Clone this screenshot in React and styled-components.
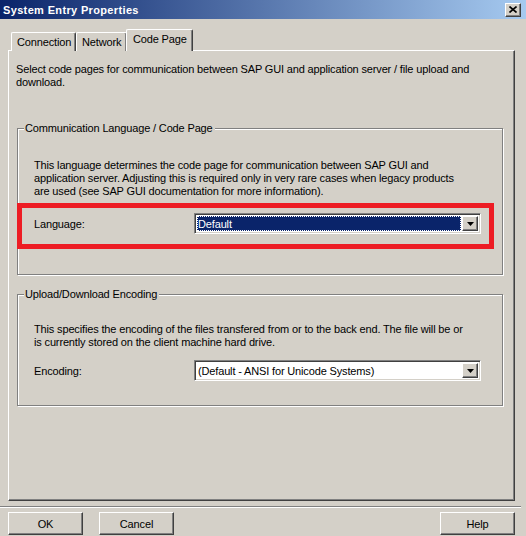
import React from 'react'
import styled, { createGlobalStyle, css } from 'styled-components'

const colors = {
  face: '#d4d0c8',
  shadow: '#808080',
  dark: '#404040',
  light: '#ffffff',
  select: '#0a246a',
  mark: '#ed1c24',
}

const GlobalStyle = createGlobalStyle`
  html, body {
    margin: 0;
    padding: 0;
    background: ${colors.face};
  }
  body {
    font-family: 'Liberation Sans', Arial, sans-serif;
    font-size: 11px;
    letter-spacing: -0.15px;
    color: #000;
  }
`

const raised = css`
  border-top: 1px solid ${colors.light};
  border-left: 1px solid ${colors.light};
  border-right: 1px solid ${colors.dark};
  border-bottom: 1px solid ${colors.dark};
  box-shadow: inset -1px -1px 0 ${colors.shadow};
`

const Window = styled.div`
  width: 526px;
  height: 536px;
  display: flex;
  flex-direction: column;
  background: ${colors.face};
  overflow: hidden;
`

const TitleBar = styled.div`
  height: 19px;
  flex: none;
  display: flex;
  align-items: center;
  justify-content: space-between;
  padding: 0 5px 0 3px;
  background: linear-gradient(to right, ${colors.select}, #a6caf0);
`

const Title = styled.span`
  color: #fff;
  font-weight: bold;
  font-size: 11px;
  letter-spacing: 0.35px;
`

const CloseButton = styled.div`
  width: 14px;
  height: 12px;
  background: ${colors.face};
  ${raised};
  display: flex;
  align-items: center;
  justify-content: center;
`

const Body = styled.div`
  flex: 1;
  display: flex;
  flex-direction: column;
  padding: 10px 11px 0 8px;
`

const TabRow = styled.div`
  display: flex;
  align-items: flex-end;
  padding-left: 3px;
  height: 22px;
  margin-bottom: -1px;
  position: relative;
  z-index: 1;
`

const Tab = styled.div`
  background: ${colors.face};
  border-top: 1px solid ${colors.light};
  border-left: 1px solid ${colors.light};
  border-right: 1px solid ${colors.dark};
  box-shadow: inset -1px 0 0 ${colors.shadow};
  border-radius: 2px 2px 0 0;
  box-sizing: border-box;
  width: ${p => p.$w}px;
  height: ${p => (p.$active ? 22 : 19)}px;
  margin: ${p => (p.$active ? '0 -2px 0 -1px' : '0')};
  padding: ${p => (p.$active ? '3px 0 0 6px' : '3px 0 0 5px')};
  white-space: nowrap;
`

const Panel = styled.div`
  height: 451px;
  box-sizing: border-box;
  ${raised};
  display: flex;
  flex-direction: column;
  padding: 12px 11px 0 7px;
`

const Intro = styled.p`
  margin: 0;
  line-height: 13px;
`

const Group = styled.fieldset`
  margin: ${p => p.$top}px 0 0 1px;
  padding: 0;
  height: ${p => p.$h}px;
  box-sizing: border-box;
  border: 1px solid ${colors.shadow};
  box-shadow: 1px 1px 0 ${colors.light}, inset 1px 1px 0 ${colors.light};
  display: flex;
  flex-direction: column;
`

const Legend = styled.legend`
  margin-left: 6px;
  padding: 0 2px 0 1px;
  line-height: 13px;
  background: ${colors.face};
`

const Note = styled.p`
  margin: ${p => p.$top}px 0 0 16px;
  line-height: 13px;
  padding-right: ${p => p.$right}px;
`

const Row = styled.div`
  display: flex;
  align-items: center;
  height: 21px;
  padding: 0 20px 0 16px;
  margin-top: ${p => p.$top}px;
`

const Highlight = styled.div`
  display: flex;
  align-items: center;
  box-sizing: border-box;
  margin: ${p => p.$top}px 8px 0 -1px;
  border: 5px solid ${colors.mark};
  height: 46px;
  padding: 0 8px 5px 12px;
`

const Label = styled.span`
  width: 160px;
  flex: none;
`

const Select = styled.div`
  width: 287px;
  height: 21px;
  box-sizing: border-box;
  display: flex;
  align-items: stretch;
  background: #fff;
  border-top: 1px solid ${colors.shadow};
  border-left: 1px solid ${colors.shadow};
  border-right: 1px solid ${colors.light};
  border-bottom: 1px solid ${colors.light};
  box-shadow: inset 1px 1px 0 ${colors.dark}, inset -1px -1px 0 ${colors.face};
  padding: 2px;
`

const Value = styled.div`
  flex: 1;
  display: flex;
  align-items: center;
  padding-left: 1px;
  margin-right: 1px;
  white-space: nowrap;
  ${p => p.$selected && css`
    background: ${colors.select};
    color: #fff;
    outline: 1px dotted ${colors.light};
    outline-offset: -1px;
  `}
`

const DropButton = styled.div`
  width: 16px;
  flex: none;
  box-sizing: border-box;
  background: ${colors.face};
  ${raised};
  display: flex;
  align-items: center;
  justify-content: center;
`

const Separator = styled.div`
  margin: 5px -6px 0 -8px;
  height: 0;
  border-top: 1px solid ${colors.shadow};
  border-bottom: 1px solid ${colors.light};
`

const Footer = styled.div`
  display: flex;
  gap: 16px;
  margin-top: 4px;
`

const Button = styled.div`
  width: 75px;
  height: 23px;
  box-sizing: border-box;
  ${raised};
  display: flex;
  align-items: center;
  justify-content: center;
  margin-left: ${p => (p.$push ? 'auto' : '0')};
`

function Arrow() {
  return (
    <svg width="7" height="4" viewBox="0 0 7 4">
      <path d="M0 0h7L3.5 4z" fill="#000" />
    </svg>
  )
}

function Dropdown({ value, selected }) {
  return (
    <Select>
      <Value $selected={selected}>{value}</Value>
      <DropButton><Arrow /></DropButton>
    </Select>
  )
}

export default function App() {
  return (
    <Window>
      <GlobalStyle />
      <TitleBar>
        <Title>System Entry Properties</Title>
        <CloseButton>
          <svg width="8" height="7" viewBox="0 0 8 7">
            <path d="M0.5 0.5l7 6M7.5 0.5l-7 6" stroke="#000" strokeWidth="1.6" />
          </svg>
        </CloseButton>
      </TitleBar>
      <Body>
        <TabRow>
          <Tab $w={65}>Connection</Tab>
          <Tab $w={51}>Network</Tab>
          <Tab $w={67} $active>Code Page</Tab>
        </TabRow>
        <Panel>
          <Intro>
            Select code pages for communication between SAP GUI and application server / file upload and download.
          </Intro>
          <Group $top={33} $h={153}>
            <Legend>Communication Language / Code Page</Legend>
            <Note $top={24} $right={36}>
              This language determines the code page for communication between SAP GUI and application server. Adjusting this is required only in very rare cases when legacy products are used (see SAP GUI documentation for more information).
            </Note>
            <Highlight $top={5}>
              <Label>Language:</Label>
              <Dropdown value="Default" selected />
            </Highlight>
          </Group>
          <Group $top={13} $h={118}>
            <Legend>Upload/Download Encoding</Legend>
            <Note $top={22} $right={29}>
              This specifies the encoding of the files transfered from or to the back end. The file will be or is currently stored on the client machine hard drive.
            </Note>
            <Row $top={11}>
              <Label>Encoding:</Label>
              <Dropdown value="(Default - ANSI for Unicode Systems)" />
            </Row>
          </Group>
        </Panel>
        <Separator />
        <Footer>
          <Button>OK</Button>
          <Button>Cancel</Button>
          <Button $push>Help</Button>
        </Footer>
      </Body>
    </Window>
  )
}
